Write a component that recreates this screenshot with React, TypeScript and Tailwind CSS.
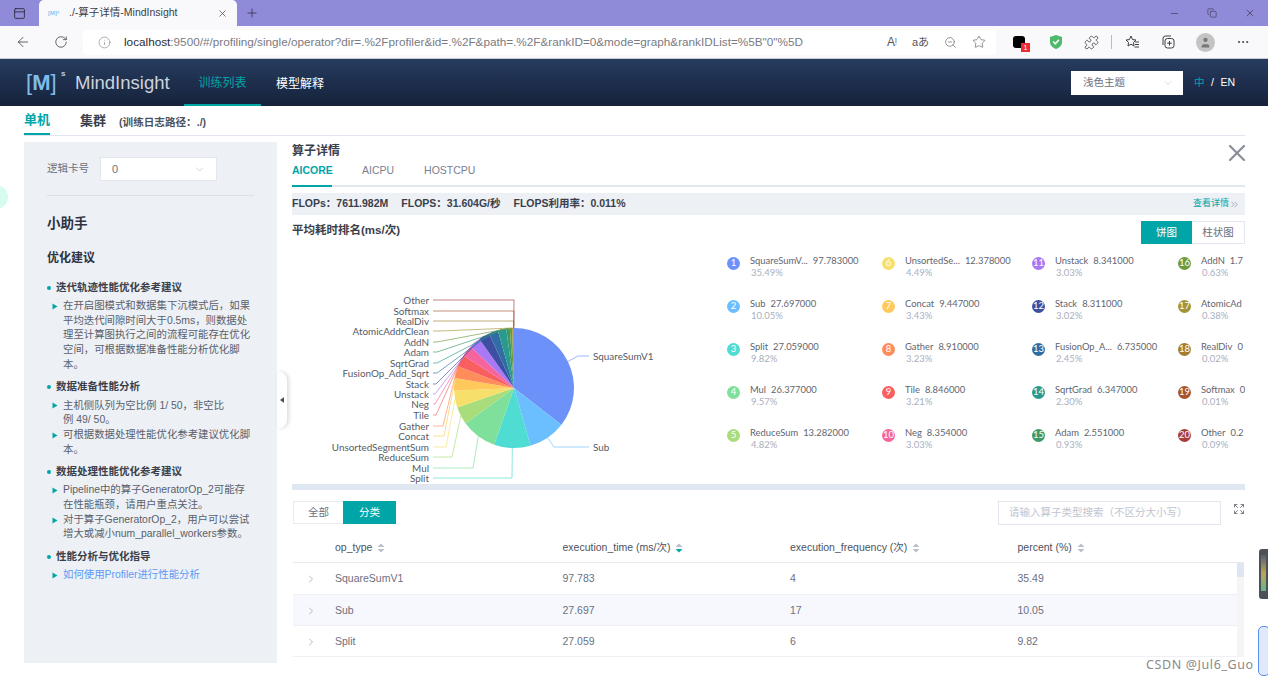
import { ArrowLeft, ChevronDown, ChevronRight, ChevronsRight, Expand, Info, MoreHorizontal, Minus, Plus, Puzzle, RotateCw, Star, X, Copy, PanelTop, User, ZoomOut } from 'lucide-react';

const ops = [
  { name: 'SquareSumV1', short: 'SquareSumV...', value: '97.783000', pct: 35.49, color: '#6c92fa', y: 356, elbow: 578 },
  { name: 'Sub', value: '27.697000', pct: 10.05, color: '#6cbfff', y: 447, elbow: 554 },
  { name: 'Split', value: '27.059000', pct: 9.82, color: '#4fdcd2', y: 478, elbow: 512 },
  { name: 'Mul', value: '26.377000', pct: 9.57, color: '#7fe09b', y: 468, elbow: 473 },
  { name: 'ReduceSum', value: '13.282000', pct: 4.82, color: '#a9dd7c', y: 457, elbow: 452 },
  { name: 'UnsortedSegmentSum', short: 'UnsortedSe...', value: '12.378000', pct: 4.49, color: '#f6e06b', y: 447, elbow: 446 },
  { name: 'Concat', value: '9.447000', pct: 3.43, color: '#ffc95c', y: 436, elbow: 444 },
  { name: 'Gather', value: '8.910000', pct: 3.23, color: '#ff8d5c', y: 426, elbow: 443 },
  { name: 'Tile', value: '8.846000', pct: 3.21, color: '#f95f5f', y: 415, elbow: 436 },
  { name: 'Neg', value: '8.354000', pct: 3.03, color: '#f5649c', y: 404, elbow: 435 },
  { name: 'Unstack', value: '8.341000', pct: 3.03, color: '#a978f5', y: 394, elbow: 435 },
  { name: 'Stack', value: '8.311000', pct: 3.02, color: '#3c4fa3', y: 384, elbow: 436 },
  { name: 'FusionOp_Add_Sqrt', short: 'FusionOp_A...', value: '6.735000', pct: 2.45, color: '#2f6da3', y: 373, elbow: 437 },
  { name: 'SqrtGrad', value: '6.347000', pct: 2.3, color: '#2a9a8e', y: 363, elbow: 437 },
  { name: 'Adam', value: '2.551000', pct: 0.93, color: '#3c9a68', y: 352, elbow: 437 },
  { name: 'AddN', value: '1.7', pct: 0.63, color: '#6e9a3e', y: 342, elbow: 437 },
  { name: 'AtomicAddrClean', short: 'AtomicAd', value: '', pct: 0.38, color: '#a5953a', y: 331, elbow: 440 },
  { name: 'RealDiv', value: '0', pct: 0.02, color: '#a57e30', y: 321, elbow: 0 },
  { name: 'Softmax', value: '0', pct: 0.01, color: '#a5562e', y: 311, elbow: 0 },
  { name: 'Other', value: '0.2', pct: 0.09, color: '#a53d3d', y: 300, elbow: 0 },
];

const CX = 514;
const CY = 388;
const R = 60;
const total = ops.reduce((sum, op) => sum + op.pct, 0);

function pointAt(fraction: number, radius: number): [number, number] {
  const angle = fraction * 2 * Math.PI;
  return [CX + radius * Math.sin(angle), CY - radius * Math.cos(angle)];
}

function PieChart() {
  let running = 0;
  return (
    <svg className="block shrink-0" width={430} height={240} viewBox="292 244 430 240" style={{ fontFamily: 'Lato, sans-serif' }}>
      {ops.map((op, i) => {
        const from = running / total;
        running += op.pct;
        const to = running / total;
        const [x1, y1] = pointAt(from, R);
        const [x2, y2] = pointAt(to, R);
        const [mx, my] = pointAt((from + to) / 2, R);
        const large = to - from > 0.5 ? 1 : 0;
        const right = i < 2;
        const elbow = op.elbow || 514;
        const end = right ? 589 : 433;
        return (
          <g key={op.name}>
            <path d={`M${CX} ${CY}L${x1} ${y1}A${R} ${R} 0 ${large} 1 ${x2} ${y2}Z`} fill={op.color} />
            <polyline
              points={`${mx},${my} ${elbow},${op.y} ${end},${op.y}`}
              fill="none"
              stroke={op.color}
              strokeOpacity={0.65}
              strokeWidth={1}
            />
            <text
              x={right ? 593 : 429}
              y={op.y}
              textAnchor={right ? 'start' : 'end'}
              dominantBaseline="central"
              fontSize={9.9}
              fill="#555b66"
            >
              {op.name}
            </text>
          </g>
        );
      })}
    </svg>
  );
}

const legendColumns = [
  { width: 'w-[155px]', items: ops.slice(0, 5), start: 0 },
  { width: 'w-[150px]', items: ops.slice(5, 10), start: 5 },
  { width: 'w-[146px]', items: ops.slice(10, 15), start: 10 },
  { width: 'w-[72px]', items: ops.slice(15, 20), start: 15 },
];

function Legend() {
  return (
    <div className="flex w-[523px] overflow-hidden pt-[10px] pl-[5px] [font-family:Lato,sans-serif]">
      {legendColumns.map((col) => (
        <div key={col.start} className={`${col.width} shrink-0 flex flex-col gap-[17px] overflow-hidden`}>
          {col.items.map((op, i) => (
            <div key={op.name} className="flex h-[26px] items-start gap-[10px] whitespace-nowrap">
              <span
                className="mt-[3px] flex size-[13px] shrink-0 items-center justify-center rounded-full text-[9.5px] text-white"
                style={{ backgroundColor: op.color }}
              >
                {col.start + i + 1}
              </span>
              <div>
                <div className="text-[9.4px] leading-[13px] text-[#5f6570]">
                  {op.short ?? op.name}
                  <span className="ml-[5px]">{op.value}</span>
                </div>
                <div className="pl-[1px] text-[9.5px] leading-[12px] text-[#a9afc0]">{op.pct.toFixed(2)}%</div>
              </div>
            </div>
          ))}
        </div>
      ))}
    </div>
  );
}

function SortIcon({ active }: { active?: boolean }) {
  return (
    <svg width="8" height="10" viewBox="0 0 8 10" className="ml-[5px] inline-block">
      <path d="M4 0.5 7.5 4H0.5Z" fill="#b9bfcc" />
      <path d="M4 9.5 7.5 6H0.5Z" fill={active ? '#00a5a7' : '#b9bfcc'} />
    </svg>
  );
}

function Arrow() {
  return (
    <svg width="6" height="7" viewBox="0 0 6 7" className="shrink-0">
      <path d="M0.5 0.5 5.5 3.5 0.5 6.5Z" fill="#00a5a7" />
    </svg>
  );
}

function Advice({ title, items }: { title: string; items: { lines: string[]; link?: boolean }[] }) {
  return (
    <div className="mb-[6px]">
      <div className="flex h-[17px] items-center gap-[5px] text-[10.5px] font-bold text-[#3a3f4b]">
        <span className="size-[4px] rounded-full bg-[#00a5a7]" />
        {title}
      </div>
      <div className="pt-[3px]">
        {items.map((item) => (
          <div key={item.lines[0]} className="flex">
            <div className="flex h-[14.7px] w-[16px] items-center pl-[5px]">
              <Arrow />
            </div>
            <div className={`text-[10.4px] leading-[14.7px] ${item.link ? 'text-[#5b9bf5]' : 'text-[#5a5f6b]'}`}>
              {item.lines.map((line) => (
                <div key={line} className="whitespace-nowrap">{line}</div>
              ))}
            </div>
          </div>
        ))}
      </div>
    </div>
  );
}

function Sidebar() {
  return (
    <aside className="h-[521px] w-[253px] shrink-0 bg-[#edf0f5] px-[23px] pt-[15px]">
      <div className="flex h-[24px] items-center">
        <span className="w-[53px] text-[10.5px] text-[#6b7080]">逻辑卡号</span>
        <div className="flex h-[24px] w-[117px] items-center justify-between border border-[#e2e6ee] bg-white pl-[11px] pr-[10px] text-[11px] text-[#6b7080]">
          0
          <ChevronDown size={13} strokeWidth={1} className="text-[#b0b5c0]" />
        </div>
      </div>
      <div className="mt-[14px] border-t border-[#dcdfe6]" />
      <div className="mt-[18px] text-[13.5px] font-bold leading-[20px] text-[#2f3340]">小助手</div>
      <div className="mt-[15px] text-[12px] font-bold leading-[18px] text-[#2f3340]">优化建议</div>
      <div className="mt-[12px]">
        <Advice
          title="迭代轨迹性能优化参考建议"
          items={[{ lines: ['在开启图模式和数据集下沉模式后，如果', '平均迭代间隙时间大于0.5ms，则数据处', '理至计算图执行之间的流程可能存在优化', '空间，可根据数据准备性能分析优化脚', '本。'] }]}
        />
        <Advice
          title="数据准备性能分析"
          items={[
            { lines: ['主机侧队列为空比例 1/ 50，非空比', '例 49/ 50。'] },
            { lines: ['可根据数据处理性能优化参考建议优化脚', '本。'] },
          ]}
        />
        <Advice
          title="数据处理性能优化参考建议"
          items={[
            { lines: ['Pipeline中的算子GeneratorOp_2可能存', '在性能瓶颈，请用户重点关注。'] },
            { lines: ['对于算子GeneratorOp_2，用户可以尝试', '增大或减小num_parallel_workers参数。'] },
          ]}
        />
        <Advice title="性能分析与优化指导" items={[{ lines: ['如何使用Profiler进行性能分析'], link: true }]} />
      </div>
    </aside>
  );
}

const rows = [
  ['SquareSumV1', '97.783', '4', '35.49'],
  ['Sub', '27.697', '17', '10.05'],
  ['Split', '27.059', '6', '9.82'],
];

function OpTable() {
  const headers = ['op_type', 'execution_time (ms/次)', 'execution_frequency (次)', 'percent (%)'];
  return (
    <div className="text-[10.5px]">
      <div className="flex h-[31px] w-[951px] items-center border-b border-[#e6e9f0] pl-[42px] pt-[1px] text-[#4d525e]">
        {headers.map((h, i) => (
          <div key={h} className="flex w-[227.5px] shrink-0 items-center">
            {h}
            <SortIcon active={i === 1} />
          </div>
        ))}
      </div>
      <div className="flex w-[951px]">
        <div className="w-[944px] overflow-hidden">
          {rows.map((row, i) => (
            <div
              key={row[0]}
              className={`flex items-center border-b border-[#eef0f5] pt-[1px] text-[#6b7080] ${i === 0 ? 'h-[32px]' : 'h-[31px]'} ${i === 1 ? 'bg-[#f6f8fd]' : ''}`}
            >
              <div className="flex w-[42px] shrink-0 justify-center pr-[6px]">
                <ChevronRight size={12} strokeWidth={1} className="text-[#6f7480]" />
              </div>
              {row.map((cell) => (
                <div key={cell} className="w-[227.5px] shrink-0">{cell}</div>
              ))}
            </div>
          ))}
        </div>
        <div className="h-[94px] w-[7px] bg-[#f5f5f6]">
          <div className="h-[14px] bg-[#dfe6f3]" />
        </div>
      </div>
    </div>
  );
}

function FavoritesIcon() {
  return (
    <svg width="16" height="16" viewBox="0 0 16 16" fill="none" stroke="currentColor" strokeWidth="1">
      <path d="M7 2 8.6 5.6 12 6 9.5 8.4 10 12 7 10.2 4 12 4.5 8.4 2 6 5.4 5.6Z" />
      <path d="M11 8h4M11 10.5h4M10.5 13h4.5" />
    </svg>
  );
}

function CollectionsIcon() {
  return (
    <svg width="16" height="16" viewBox="0 0 16 16" fill="none" stroke="currentColor" strokeWidth="1">
      <path d="M3 11V4.5A2.5 2.5 0 0 1 5.5 2H11" />
      <rect x="5" y="4.5" width="9" height="9.5" rx="2.5" />
      <path d="M9.5 7v4.5M7.2 9.2h4.6" />
    </svg>
  );
}

function BrowserChrome() {
  return (
    <>
      <div className="flex h-[26px] items-end bg-[#8f8bd8] text-[#2a2a3a]">
        <div className="flex h-[26px] w-[39px] items-center justify-center">
          <PanelTop size={13} strokeWidth={1.6} />
        </div>
        <div className="flex h-[26px] w-[198px] items-center rounded-t-[5px] bg-[#f9f9fb] pl-[9px] pr-[9px] text-[10.5px]">
          <span className="w-[21px] text-[6px] font-bold text-[#8cc4ee]">[M]ˢ</span>
          <span className="flex-1 whitespace-nowrap text-[#3c3c46]">./-算子详情-MindInsight</span>
          <X size={11} strokeWidth={1.4} />
        </div>
        <div className="flex h-[26px] w-[30px] items-center justify-center">
          <Plus size={14} strokeWidth={1.2} />
        </div>
        <div className="flex h-[26px] flex-1 items-center justify-end gap-[27px] pr-[12px]">
          <Minus size={11} strokeWidth={1.2} />
          <Copy size={10} strokeWidth={1.2} />
          <X size={12} strokeWidth={1.2} />
        </div>
      </div>
      <div className="flex h-[33px] items-center border-b border-[#c9c9cf] bg-[#f9f9fb] text-[#3c3c46]">
        <div className="flex w-[83px] items-center gap-[23px] pl-[15px]">
          <ArrowLeft size={16} strokeWidth={1.2} />
          <RotateCw size={14} strokeWidth={1.3} />
        </div>
        <div className="flex h-[25px] w-[913px] items-center rounded-[4px] bg-white pl-[15px] pr-[10px]">
          <Info size={13} strokeWidth={1} className="text-[#6b6b72]" />
          <span className="ml-[13px] flex-1 whitespace-nowrap text-[11.74px] text-[#7a7a82]">
            <span className="text-[#2b2b33]">localhost</span>:9500/#/profiling/single/operator?dir=.%2Fprofiler&id=.%2F&path=.%2F&rankID=0&mode=graph&rankIDList=%5B"0"%5D
          </span>
          <div className="flex items-center gap-[15px] text-[#55555d]">
            <span className="text-[12px]">Aᵎ</span>
            <span className="text-[11px]">aあ</span>
            <ZoomOut size={13} strokeWidth={1.1} />
            <Star size={14} strokeWidth={1.1} />
          </div>
        </div>
        <div className="flex flex-1 items-center pl-[17px]">
          <div className="relative size-[12px] rounded-[3px] bg-black">
            <span className="absolute left-[8px] top-[7px] h-[9px] w-[9px] bg-[#ee2b32] text-center text-[7px] leading-[9px] text-white">1</span>
          </div>
          <svg width="14" height="16" viewBox="0 0 14 16" className="ml-[24px]">
            <path d="M7 1 13 3V8C13 11.5 10 14 7 15 4 14 1 11.5 1 8V3Z" fill="#4cb96b" />
            <path d="M4.2 7.6 6.3 9.8 10 5.8" fill="none" stroke="#fff" strokeWidth="1.5" />
          </svg>
          <Puzzle size={15} strokeWidth={1.3} className="ml-[21px]" />
          <span className="ml-[12px] h-[14px] w-px bg-[#bbbbc2]" />
          <span className="ml-[12px]"><FavoritesIcon /></span>
          <span className="ml-[20px]"><CollectionsIcon /></span>
          <span className="ml-[20px] flex size-[19px] items-center justify-center rounded-full bg-[#c4c4c4] text-[#77777c]">
            <User size={13} fill="#77777c" strokeWidth={0} />
          </span>
          <MoreHorizontal size={14} strokeWidth={1.5} className="ml-[21px]" />
        </div>
      </div>
    </>
  );
}

function AppHeader() {
  return (
    <header className="flex h-[47px] items-stretch bg-gradient-to-b from-[#263c60] to-[#16223a] pl-[26px] pr-[33px]">
      <div className="flex w-[158px] items-center">
        <span className="relative w-[49px] whitespace-nowrap text-[22px] leading-none text-[#7fbce8]">
          <span className="font-normal">[</span>
          <span className="font-bold">M</span>
          <span className="font-normal">]</span>
          <span className="absolute left-[35px] top-[-2px] text-[8px] font-bold text-[#c5cfdd]">s</span>
        </span>
        <span className="text-[18.5px] text-[#cdd3de]">MindInsight</span>
      </div>
      <div className="flex w-[77px] items-center justify-center border-b-2 border-[#00a5a7] pt-[2px] text-[12px] text-[#00a5a7]">训练列表</div>
      <div className="flex w-[78px] items-center justify-center pt-[2px] text-[12px] text-white">模型解释</div>
      <div className="flex flex-1 items-center justify-end">
        <div className="flex h-[24px] w-[112px] items-center justify-between bg-white pl-[12px] pr-[9px] text-[10.5px] text-[#6b7080]">
          浅色主题
          <ChevronDown size={12} strokeWidth={1} className="text-[#b0b5c0]" />
        </div>
        <div className="ml-[11px] flex w-[41px] justify-between text-[10.5px] text-white">
          <span className="text-[#00a5a7]">中</span>
          <span>/</span>
          <span>EN</span>
        </div>
      </div>
    </header>
  );
}

export default function App() {
  return (
    <div className="relative h-[680px] w-[1268px] overflow-hidden bg-white [font-family:'Liberation_Sans','Noto_Sans_CJK_SC',sans-serif]">
      <BrowserChrome />
      <AppHeader />

      <div className="mx-[24px] flex h-[30px] w-[1221px] items-stretch border-b border-[#e2e6ee]">
        <div className="flex w-[26px] items-center justify-center border-b-2 border-[#00a5a7] pt-[1px] text-[13px] font-bold text-[#00a5a7]">单机</div>
        <div className="ml-[30px] flex items-center pt-[1px] text-[13px] font-bold text-[#3a3f4b]">集群</div>
        <div className="ml-[13px] flex items-center pt-[5px] text-[10.6px] font-bold text-[#4d525e]">(训练日志路径：./)</div>
      </div>

      <div className="mt-[6px] flex pl-[24px]">
        <Sidebar />
        <main className="ml-[15px] w-[953px]">
          <div className="h-[18px] pt-[1px] text-[12px] font-bold leading-[17px] text-[#3a3f4b]">算子详情</div>
          <div className="flex h-[27px] items-stretch gap-[30px] border-b-2 border-[#e2e6ee] pt-[3px] text-[10.5px] text-[#7a8090]">
            <span className="mb-[-2px] w-[40px] border-b-2 border-[#00a5a7] font-bold text-[#00a5a7]">AICORE</span>
            <span>AICPU</span>
            <span>HOSTCPU</span>
          </div>
          <div className="mt-[6px] flex h-[22px] items-center justify-between bg-[#edf0f5] pr-[5px] text-[10.5px] font-bold text-[#3a3f4b]">
            <div className="flex gap-[13px]">
              <span>FLOPs：7611.982M</span>
              <span>FLOPS：31.604G/秒</span>
              <span>FLOPS利用率：0.011%</span>
            </div>
            <span className="flex items-center text-[9px] font-normal text-[#00a5a7]">
              查看详情
              <ChevronsRight size={11} strokeWidth={1.2} className="text-[#6b7080]" />
            </span>
          </div>
          <div className="mt-[6px] flex h-[23px] items-start justify-between">
            <span className="pt-[1px] text-[11.5px] font-bold leading-[17px] text-[#3a3f4b]">平均耗时排名(ms/次)</span>
            <div className="flex h-[23px] text-[10.5px]">
              <span className="flex w-[51px] items-center justify-center bg-[#00a5a7] text-white">饼图</span>
              <span className="flex w-[53px] items-center justify-center border border-l-0 border-[#e2e6ee] text-[#6b7080]">柱状图</span>
            </div>
          </div>
          <div className="flex h-[240px]">
            <PieChart />
            <Legend />
          </div>
          <div className="h-[6px] bg-[#dfe7f2]" />

          <div className="mt-[11px] flex h-[23px] items-center justify-between">
            <div className="ml-[1px] flex h-[23px] text-[10.5px]">
              <span className="flex w-[50px] items-center justify-center border border-r-0 border-[#e8ebf1] text-[#6b7080]">全部</span>
              <span className="flex w-[53px] items-center justify-center bg-[#00a5a7] text-white">分类</span>
            </div>
            <div className="flex items-center">
              <div className="flex h-[24px] w-[223px] items-center border border-[#e2e6ee] pl-[10px] text-[10.5px] text-[#c0c4cf]">
                请输入算子类型搜索（不区分大小写）
              </div>
              <div className="ml-[12px] flex w-[12px] justify-center pb-[7px]">
                <Expand size={12} strokeWidth={1.6} className="text-[#5f6570]" />
              </div>
            </div>
          </div>
          <div className="ml-[1px] mt-[8px]">
            <OpTable />
          </div>
        </main>
      </div>

      <X size={28} strokeWidth={1.9} className="absolute left-[1223px] top-[139px] text-[#8a8f9c]" />
      <div className="absolute left-[-16px] top-[185px] size-[24px] rounded-full bg-[#d6fbef]" />
      <div className="absolute left-[277px] top-[372px] flex h-[56px] w-[10px] items-center justify-center rounded-r-[8px] bg-white shadow-[2px_0_4px_rgba(0,0,0,0.14)]">
        <svg width="4" height="6" viewBox="0 0 4 6">
          <path d="M4 0V6L0 3Z" fill="#4d525e" />
        </svg>
      </div>
      <div className="absolute left-[1259px] top-[549px] flex h-[50px] w-[12px] justify-center rounded-[3px] bg-[#4c5058] pr-[3px] pt-[6px]">
        <div className="h-[36px] w-[5px] bg-gradient-to-b from-[#5a5e66] via-[#b9a45a] to-[#5fb58c]" />
      </div>
      <div className="absolute left-[1258px] top-[626px] h-[50px] w-[12px] rounded-[5px] border border-[#5b8ef0] bg-[#e0e9fb]" />
      <div className="absolute left-[1146px] top-[656px] text-[12.5px] tracking-[0.6px] text-[#8a8a8a] [font-family:'Noto_Sans',sans-serif]">CSDN @Jul6_Guo</div>
    </div>
  );
}
